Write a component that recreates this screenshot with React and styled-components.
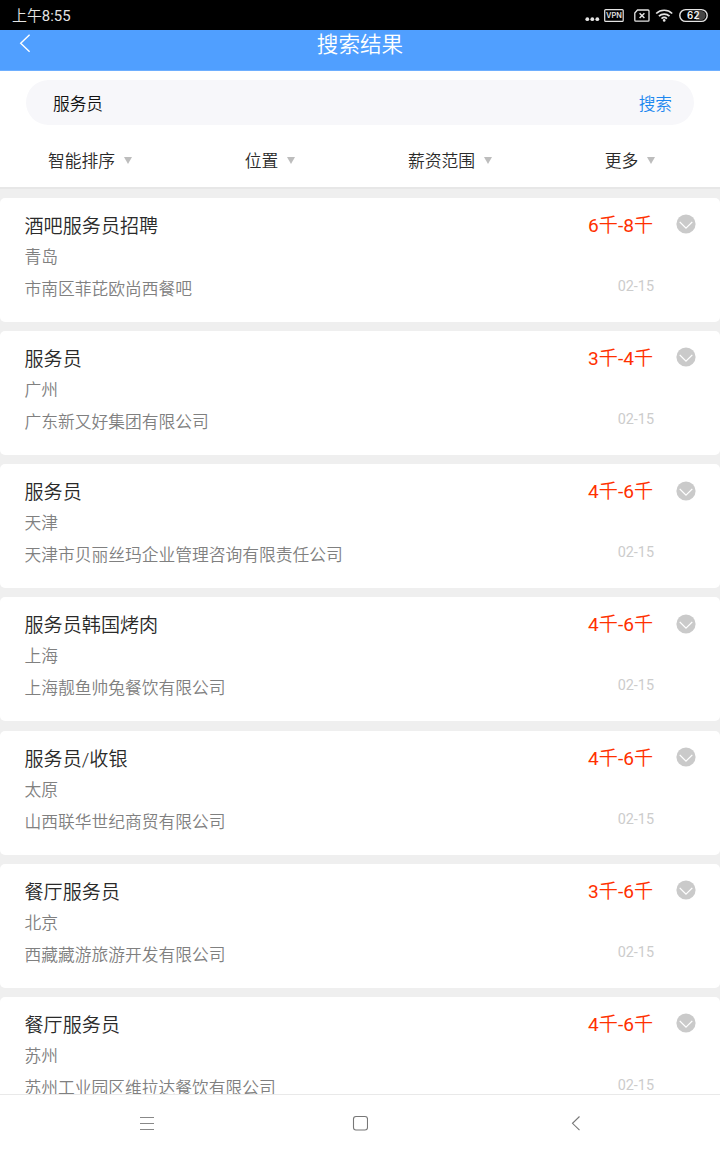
import styled, { createGlobalStyle } from "styled-components";

const GlobalStyle = createGlobalStyle`
    * {
        box-sizing: border-box;
    }
    body {
        margin: 0;
        background-color: #efefef;
        font-family: Roboto, "Noto Sans CJK SC", sans-serif;
        font-weight: 350;
    }
`;

const Screen = styled.div`
    display: flex;
    flex-direction: column;
    width: 720px;
    height: 1152px;
    overflow: hidden;
    background-color: #efefef;
`;

const StatusBar = styled.div`
    flex: none;
    display: flex;
    align-items: center;
    justify-content: space-between;
    height: 30px;
    padding: 1px 12px 0;
    background-color: #000;
    color: #e4e4e4;
    font-size: 14.9px;
    line-height: 29px;
    svg {
        display: block;
    }
`;

const Clock = styled.div`
    padding-top: 1px;
`;

const Latin = styled.span`
    font-weight: 400;
`;

const Header = styled.header`
    flex: none;
    display: grid;
    grid-template-columns: 60px 1fr 60px;
    height: 41px;
    background-color: #509fff;
    border-bottom: 1px solid #6eafff;
    svg {
        margin: 4px 0 0 19px;
    }
`;

const Title = styled.h1`
    margin: 0;
    color: #fff;
    font-size: 21.6px;
    font-weight: 350;
    line-height: 30px;
    text-align: center;
`;

const SearchArea = styled.div`
    flex: none;
    padding: 9px 26px 0;
    background-color: #fff;
`;

const SearchBox = styled.div`
    display: flex;
    align-items: center;
    justify-content: space-between;
    height: 45px;
    padding: 0 22px 0 27px;
    border-radius: 23px;
    background-color: #f7f7fa;
    color: #111;
    font-size: 16.7px;
`;

const SearchButton = styled.span`
    color: #1e88f0;
`;

const Filters = styled.div`
    flex: none;
    display: grid;
    grid-template-columns: repeat(4, 1fr);
    height: 64px;
    background-color: #fff;
    border-bottom: 2px solid #e7e7e7;
`;

const Filter = styled.div`
    display: flex;
    justify-content: center;
    align-items: center;
    gap: 9px;
    height: 70px;
    color: #2a2a2a;
    font-size: 16.8px;
    &::after {
        content: "";
        margin-top: 1px;
        border: 4px solid transparent;
        border-top: 7px solid #bdbdbd;
        border-bottom: 0;
    }
`;

const List = styled.div`
    flex: 1;
    min-height: 0;
    overflow: hidden;
    padding-top: 8.8px;
`;

const Card = styled.div`
    display: flex;
    justify-content: space-between;
    height: 124px;
    margin-bottom: 9.2px;
    padding: 11px 24px 0 24.5px;
    border-radius: 5px;
    background-color: #fff;
`;

const Line = styled.div`
    color: #808080;
    font-size: 16.75px;
    line-height: 32px;
    height: 32px;
    white-space: nowrap;
`;

const JobTitle = styled(Line)`
    color: #2a2a2a;
    font-size: 19.1px;
    line-height: 35px;
`;

const Side = styled.div`
    display: flex;
    gap: 22px;
    svg {
        margin-top: 5.5px;
    }
`;

const Pay = styled.div`
    text-align: right;
`;

const Salary = styled(Line)`
    margin-right: 1px;
    color: #ff3000;
    font-size: 19.1px;
    line-height: 34px;
`;

const PostDate = styled.div`
    margin-top: 30px;
    color: #ccc;
    font-size: 14.4px;
    font-weight: 400;
    line-height: 32px;
`;

const NavBar = styled.nav`
    flex: none;
    display: flex;
    align-items: center;
    justify-content: space-between;
    height: 58px;
    padding: 0 139px 2px;
    background-color: #fff;
    border-top: 1px solid #e9e9e9;
`;

const filters = ["智能排序", "位置", "薪资范围", "更多"];

const jobs = [
    { title: "酒吧服务员招聘", city: "青岛", company: "市南区菲芘欧尚西餐吧", min: 6, max: 8 },
    { title: "服务员", city: "广州", company: "广东新又好集团有限公司", min: 3, max: 4 },
    { title: "服务员", city: "天津", company: "天津市贝丽丝玛企业管理咨询有限责任公司", min: 4, max: 6 },
    { title: "服务员韩国烤肉", city: "上海", company: "上海靓鱼帅兔餐饮有限公司", min: 4, max: 6 },
    { title: "服务员/收银", city: "太原", company: "山西联华世纪商贸有限公司", min: 4, max: 6 },
    { title: "餐厅服务员", city: "北京", company: "西藏藏游旅游开发有限公司", min: 3, max: 6 },
    { title: "餐厅服务员", city: "苏州", company: "苏州工业园区维拉达餐饮有限公司", min: 4, max: 6 },
];

function StatusIcons() {
    return (
        <svg width="124" height="20" viewBox="0 0 124 20" fill="none" stroke="#e4e4e4">
            <g fill="#e4e4e4" stroke="none">
                <circle cx="3.3" cy="13.2" r="1.9" />
                <circle cx="8.3" cy="13.2" r="1.9" />
                <circle cx="13.3" cy="13.2" r="1.9" />
            </g>
            <rect x="20.7" y="3.6" width="18.5" height="11.8" rx="1" strokeWidth="1.2" />
            <text x="30" y="12.2" fill="#e4e4e4" stroke="none" fontFamily="Inter, sans-serif" fontSize="7.4" fontWeight="600" textAnchor="middle">VPN</text>
            <path d="M53.5 4H64a1 1 0 0 1 1 1v9.2a1 1 0 0 1-1 1H51.8a1 1 0 0 1-1-1V7z" strokeWidth="1.3" />
            <path d="M55.6 7.2l4.8 4.8M60.4 7.2l-4.8 4.8" strokeWidth="1.5" />
            <g strokeWidth="1.7">
                <path d="M72.2 7.5a11.5 11.5 0 0 1 16 0" />
                <path d="M74.9 10.2a7.7 7.7 0 0 1 10.6 0" />
                <path d="M77.5 12.7a4 4 0 0 1 5.4 0" />
            </g>
            <circle cx="80.2" cy="14.4" r="1.3" fill="#e4e4e4" stroke="none" />
            <path d="M112 5h5a4.5 4.5 0 0 1 0 9h-5z" fill="#444" stroke="none" />
            <rect x="95.8" y="3.6" width="27.4" height="11.8" rx="5.9" strokeWidth="1.4" />
            <text x="109.3" y="13" fill="#f4f4f4" stroke="none" fontFamily="Inter, sans-serif" fontSize="9.8" fontWeight="600" textAnchor="middle">62</text>
        </svg>
    );
}

function MoreIcon() {
    return (
        <svg width="20" height="20" viewBox="0 0 20 20" fill="none">
            <circle cx="10" cy="10" r="9.6" fill="#cacaca" />
            <path d="M3.7 7.9L10 14.2l6.3-6.3" stroke="#fff" strokeWidth="1.3" />
        </svg>
    );
}

function JobCard({ job }) {
    return (
        <Card>
            <div>
                <JobTitle>{job.title}</JobTitle>
                <Line>{job.city}</Line>
                <Line>{job.company}</Line>
            </div>
            <Side>
                <Pay>
                    <Salary>
                        <Latin>{job.min}</Latin>千<Latin>-{job.max}</Latin>千
                    </Salary>
                    <PostDate>02-15</PostDate>
                </Pay>
                <MoreIcon />
            </Side>
        </Card>
    );
}

export default function App() {
    return (
        <>
            <GlobalStyle />
            <Screen>
                <StatusBar>
                    <Clock>上午<Latin>8:55</Latin></Clock>
                    <StatusIcons />
                </StatusBar>
                <Header>
                    <svg width="14" height="20" viewBox="0 0 14 20" fill="none" stroke="#fff" strokeWidth="1.4">
                        <path d="M10.6 0.7L1.7 9.3l8.9 8.5" />
                    </svg>
                    <Title>搜索结果</Title>
                </Header>
                <SearchArea>
                    <SearchBox>
                        <span>服务员</span>
                        <SearchButton>搜索</SearchButton>
                    </SearchBox>
                </SearchArea>
                <Filters>
                    {filters.map((name) => (
                        <Filter key={name}>{name}</Filter>
                    ))}
                </Filters>
                <List>
                    {jobs.map((job, i) => (
                        <JobCard key={i} job={job} />
                    ))}
                </List>
                <NavBar>
                    <svg width="16" height="16" viewBox="0 0 16 16" fill="none" stroke="#888" strokeWidth="1.1">
                        <path d="M1 2.5h14M1 8.5h14M1 14.5h14" />
                    </svg>
                    <svg width="16" height="16" viewBox="0 0 16 16" fill="none" stroke="#777" strokeWidth="1.1">
                        <rect x="1.5" y="1.5" width="14" height="13.5" rx="2.5" />
                    </svg>
                    <svg width="16" height="16" viewBox="0 0 16 16" fill="none" stroke="#777" strokeWidth="1.1">
                        <path d="M14.5 1.5L7.5 8.3l7 6.9" />
                    </svg>
                </NavBar>
            </Screen>
        </>
    );
}
